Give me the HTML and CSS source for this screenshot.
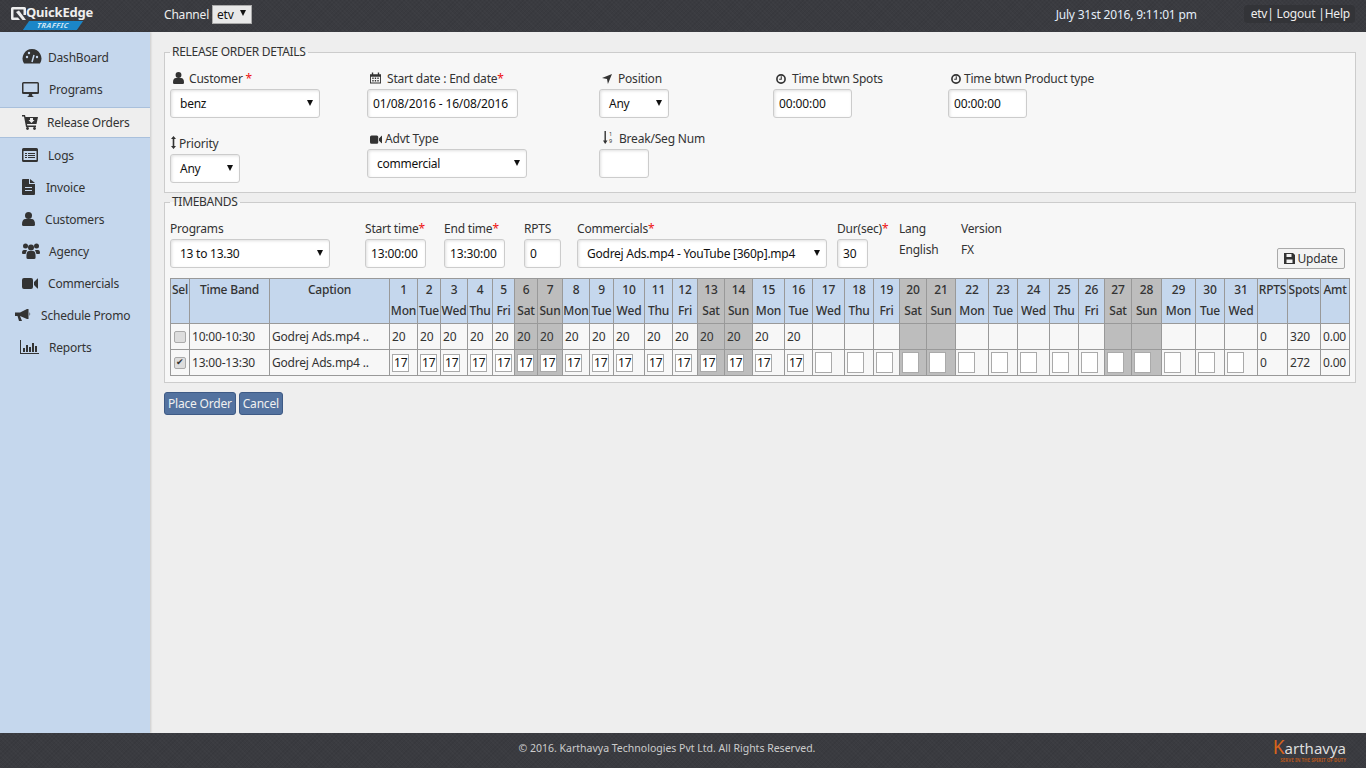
FILE: index.html
```html
<!DOCTYPE html>
<html>
<head>
    <meta http-equiv="Content-Type" content="text/html; charset=utf-8" />
    <title>QuickEdge Traffic</title>
    <link rel="stylesheet" href="styles.css">
</head>

<body>
    <header class="topbar">
        <div class="logo">
            <svg class="logo-mark" width="15" height="13" viewBox="0 0 15 13"><path d="M1.500 0h12Q15 0 15 1.500V8l-2.500 0V2.500h-10v8H7L9 13H1.500Q0 13 0 11.500v-10Q0 0 1.500 0z" fill="#eee"/><path d="M5 5l3-1.500L15 13h-3.500z" fill="#eee"/></svg>
            <span class="logo-name">QuickEdge</span>
            <span class="logo-tag"><span>TRAFFIC</span></span>
        </div>
        <div class="channel">
            <label>Channel</label>
            <span class="channel-select">etv <i class="arrow"></i></span>
        </div>
        <div class="clock">July 31st 2016, 9:11:01 pm</div>
        <div class="user-links">etv| Logout |Help</div>
    </header>

    <div class="layout">
        <nav class="sidebar">
            <ul>
                <li class="nav-dash"><svg width="20" height="18" viewBox="0 0 20 18"><path d="M10 1a9.500 9.500 0 0 0-8 14.500h16A9.500 9.500 0 0 0 10 1z" fill="#333"/><path d="M10 14l2-7" stroke="#c5d7ed" stroke-width="1.500"/><circle cx="5" cy="9" r="1.200" fill="#c5d7ed"/><circle cx="7" cy="5" r="1.200" fill="#c5d7ed"/><circle cx="15" cy="9" r="1.200" fill="#c5d7ed"/></svg>DashBoard</li>
                <li class="nav-prog"><svg width="17" height="15" viewBox="0 0 17 15"><path d="M0 1.500Q0 0 1.500 0h14Q17 0 17 1.500V11q0 1-1.500 1h-14Q0 12 0 11zM1.500 1.500V10h14V1.500zM5 15q2-.5 2-3h3q0 2.500 2 3z" fill="#333" fill-rule="evenodd"/></svg>Programs</li>
                <li class="nav-release active"><svg width="16" height="15" viewBox="0 0 16 15"><path d="M0 0h3l.5 2H16l-1.500 7H5l.3 1.500H14V12H4L2 1.500H0z" fill="#333"/><circle cx="5.500" cy="13.500" r="1.400" fill="#333"/><circle cx="12.500" cy="13.500" r="1.400" fill="#333"/><path d="M8 3h3v2h1.500L9.500 8 6.500 5H8z" fill="#eee"/></svg>Release Orders</li>
                <li class="nav-logs"><svg width="16" height="14" viewBox="0 0 16 14"><path d="M0 1.500Q0 0 1.500 0h13Q16 0 16 1.500v11q0 1.500-1.500 1.500h-13Q0 14 0 12.500zM1.500 3v9h13V3z" fill="#333" fill-rule="evenodd"/><path d="M3 5h2v1H3zM6 5h7v1H6zM3 7h2v1H3zM6 7h7v1H6zM3 9h2v1H3zM6 9h7v1H6z" fill="#333"/></svg>Logs</li>
                <li class="nav-inv"><svg width="13" height="16" viewBox="0 0 13 16"><path d="M1 0h6v5h6v10q0 1-1 1H1q-1 0-1-1V1q0-1 1-1zM8 0l5 4H8zM3 8v1h7V8zM3 11v1h7v-1z" fill="#333" fill-rule="evenodd"/></svg>Invoice</li>
                <li class="nav-cust"><svg width="13" height="14" viewBox="0 0 13 14"><circle cx="6.500" cy="3.500" r="3.500" fill="#333"/><path d="M0 12.500Q0 7 3.500 7h6Q13 7 13 12.500 13 14 11.500 14h-10Q0 14 0 12.500z" fill="#333"/></svg>Customers</li>
                <li class="nav-agency"><svg width="18" height="16" viewBox="0 0 18 16"><circle cx="3.500" cy="3" r="2.500" fill="#333"/><circle cx="14.500" cy="3" r="2.500" fill="#333"/><circle cx="9" cy="4.500" r="3" fill="#333"/><path d="M0 10q0-3 2-3h3L3.500 11H1q-1 0-1-1zM18 10q0-3-2-3h-3l1.500 4H17q1 0 1-1zM4.500 15q-.5-7 2.500-7h4q3 0 2.500 7 0 1-1.500 1H6q-1.500 0-1.500-1z" fill="#333"/></svg>Agency</li>
                <li class="nav-comm"><svg width="16" height="11" viewBox="0 0 16 11"><path d="M2 0h7q2 0 2 2v7q0 2-2 2H2q-2 0-2-2V2q0-2 2-2zM12 4l3.500-3.500H16v10h-.5L12 7z" fill="#333"/></svg>Commercials</li>
                <li class="nav-promo"><svg width="16" height="14" viewBox="0 0 16 14"><path d="M0 4.500h5L12 1h1.500v10H12L5 8 7 13H4L2.500 8H0zM14.500 4q1.500 2 0 4z" fill="#333"/></svg>Schedule Promo</li>
                <li class="nav-rep"><svg width="19" height="14" viewBox="0 0 19 14"><path d="M0 0h1v13h18v1H0zM3 8h2v4H3zM6 5h2v7H6zM9 7h2v5H9zM12 3h2v9h-2zM15 6h2v6h-2z" fill="#333"/></svg>Reports</li>
            </ul>
        </nav>

        <main class="content">
            <fieldset class="panel panel-order">
                <legend>RELEASE ORDER DETAILS</legend>
                <div class="order-row">
                    <div class="field f-customer">
                        <label><svg class="ico gap5" width="11" height="12" viewBox="0 0 13 14"><circle cx="6.500" cy="3.500" r="3.500" fill="#333"/><path d="M0 12.500Q0 7 3.500 7h6Q13 7 13 12.500 13 14 11.500 14h-10Q0 14 0 12.500z" fill="#333"/></svg>Customer <em>*</em></label>
                        <div class="box sel w150">benz<i class="arrow"></i></div>
                    </div>
                    <div class="field f-date">
                        <label><svg class="ico gap6" width="11" height="12" viewBox="0 0 12 12"><path d="M0 2h2V0h1.500v2h5V0H10v2h2v10H0zM1 4.500V11h10V4.500z" fill="#333" fill-rule="evenodd"/><path d="M2.500 5.500h1.500V7H2.500zM5.200 5.500h1.500V7H5.200zM8 5.500h1.500V7H8zM2.500 8.200h1.500v1.500H2.500zM5.200 8.200h1.500v1.500H5.200zM8 8.200h1.500v1.500H8z" fill="#333"/></svg>Start date : End date<em>*</em></label>
                        <div class="box text w151">01/08/2016 - 16/08/2016</div>
                    </div>
                    <div class="field f-pos">
                        <label><svg class="ico gap6" width="10" height="10" viewBox="0 0 11 11"><path d="M11 0L6.500 11 5.500 5.500 0 4.500z" fill="#333"/></svg>Position</label>
                        <div class="box sel w70">Any<i class="arrow"></i></div>
                    </div>
                    <div class="field f-spots">
                        <label><svg class="ico gap6" width="10" height="10" viewBox="0 0 11 11"><circle cx="5.500" cy="5.500" r="4.500" fill="none" stroke="#333" stroke-width="1.800"/><path d="M5.800 2.500v3.300H3.500" fill="none" stroke="#333" stroke-width="1.200"/></svg>Time btwn Spots</label>
                        <div class="box time">00:00:00</div>
                    </div>
                    <div class="field f-prod">
                        <label><svg class="ico gap3" width="10" height="10" viewBox="0 0 11 11"><circle cx="5.500" cy="5.500" r="4.500" fill="none" stroke="#333" stroke-width="1.800"/><path d="M5.800 2.500v3.300H3.500" fill="none" stroke="#333" stroke-width="1.200"/></svg>Time btwn Product type</label>
                        <div class="box time">00:00:00</div>
                    </div>
                </div>
                <div class="order-row row-two">
                    <div class="field f-customer f-prio">
                        <label><svg class="ico gap3" width="5" height="13" viewBox="0 0 5 13"><path d="M2.500 0L5 3H3.300v7H5l-2.500 3L0 10h1.700V3H0z" fill="#333"/></svg>Priority</label>
                        <div class="box sel w70">Any<i class="arrow"></i></div>
                    </div>
                    <div class="field f-date">
                        <label><svg class="ico gap3" width="12" height="9" viewBox="0 0 16 11"><path d="M2 0h7q2 0 2 2v7q0 2-2 2H2q-2 0-2-2V2q0-2 2-2zM12 4l3.500-3.500H16v10h-.5L12 7z" fill="#333"/></svg>Advt Type</label>
                        <div class="box sel w160">commercial<i class="arrow"></i></div>
                    </div>
                    <div class="field f-pos f-break">
                        <label><svg class="ico gap6" width="10" height="13" viewBox="0 0 10 13"><path d="M1.500 0h1.400v9.500H4.500L2.200 13 0 9.500h1.500z" fill="#333"/><text x="6" y="5" font-size="5.500" fill="#333">1</text><text x="6" y="12" font-size="5.500" fill="#333">9</text></svg>Break/Seg Num</label>
                        <div class="box blank"></div>
                    </div>
                </div>
            </fieldset>

            <fieldset class="panel panel-bands">
                <legend>TIMEBANDS</legend>
                <div class="band-row">
                    <div class="field b-prog"><label>Programs</label><div class="box sel w160">13 to 13.30<i class="arrow"></i></div></div>
                    <div class="field b-start"><label>Start time<em>*</em></label><div class="box plain w61">13:00:00</div></div>
                    <div class="field b-end"><label>End time<em>*</em></label><div class="box plain w61">13:30:00</div></div>
                    <div class="field b-rpts"><label>RPTS</label><div class="box plain w37">0</div></div>
                    <div class="field b-comm"><label>Commercials<em>*</em></label><div class="box sel w250">Godrej Ads.mp4 - YouTube [360p].mp4<i class="arrow"></i></div></div>
                    <div class="field b-dur"><label>Dur(sec)<em>*</em></label><div class="box plain w31">30</div></div>
                    <div class="field b-lang"><label>Lang</label><span class="static">English</span></div>
                    <div class="field b-ver"><label>Version</label><span class="static">FX</span></div>
                    <button class="update-btn"><svg width="11" height="11" viewBox="0 0 11 11"><path d="M0 0h9l2 2v9H0zM2.500 1v3h5V1zM2.500 6.500V10h6V6.500z" fill="#333" fill-rule="evenodd"/></svg>Update</button>
                </div>
                <table class="grid" id="grid"></table>
            </fieldset>

            <div class="actions">
                <button class="btn-blue">Place Order</button>
                <button class="btn-blue">Cancel</button>
            </div>
        </main>
    </div>

    <footer class="bottombar">
        <span class="copy">© 2016. Karthavya Technologies Pvt Ltd. All Rights Reserved.</span>
        <div class="brand">
            <span class="brand-name"><b>K</b>arthavya</span>
            <span class="brand-tag">SERVE IN THE SPIRIT OF DUTY</span>
        </div>
    </footer>

    <script>
        // column widths taken from the header row
        let dayWidths = [28,23,27,25,22,23,25,27,24,31,28,25,27,28,32,28,32,29,26,27,29,33,29,32,29,26,27,30,34,29,33];
        let names = ["Mon","Tue","Wed","Thu","Fri","Sat","Sun"];
        let grid = document.getElementById("grid");
        let html = '<colgroup><col style="width:19px"><col style="width:80px"><col style="width:120px">';
        for (let i = 0; i < 31; i++) {
            html += `<col style="width:${dayWidths[i]}px">`;
        }
        html += '<col style="width:30px"><col style="width:33px"><col style="width:29px"></colgroup>';

        function isWeekend(i) {
            return i % 7 === 5 || i % 7 === 6;
        }

        html += '<tr><th>Sel</th><th>Time Band</th><th>Caption</th>';
        for (let i = 0; i < 31; i++) {
            let cls = isWeekend(i) ? ' class="off"' : "";
            html += `<th${cls}><div>${i + 1}</div><div>${names[i % 7]}</div></th>`;
        }
        html += '<th>RPTS</th><th>Spots</th><th>Amt</th></tr>';

        html += '<tr><td class="chk"><span class="tick"></span></td><td>10:00-10:30</td><td>Godrej Ads.mp4 ..</td>';
        for (let i = 0; i < 31; i++) {
            let cls = isWeekend(i) ? ' class="off"' : "";
            html += `<td${cls}>${i < 16 ? 20 : ""}</td>`;
        }
        html += '<td>0</td><td>320</td><td>0.00</td></tr>';

        html += '<tr><td class="chk"><span class="tick on"></span></td><td>13:00-13:30</td><td>Godrej Ads.mp4 ..</td>';
        for (let i = 0; i < 31; i++) {
            let cls = isWeekend(i) ? "off" : "";
            if (i < 16) {
                html += `<td class="${cls}"><span class="day-box">17</span></td>`;
            } else {
                html += `<td class="${cls}"><span class="day-box empty"></span></td>`;
            }
        }
        html += '<td>0</td><td>272</td><td>0.00</td></tr>';
        grid.innerHTML = html;
    </script>
</body>

</html>
```
FILE: styles.css
```css
html, body {
    height: 100%;
}
body {
    margin: 0;
    padding: 0;
    display: flex;
    flex-direction: column;
    height: 768px;
    overflow: hidden;
    background: #eee;
    color: #333;
    font-family: "Noto Sans", "Open Sans", sans-serif;
    font-size: 12px;
    letter-spacing: -.2px;
}
em {
    color: #e11;
    font-style: normal;
}
.topbar, .bottombar {
    background-color: #3a3b40;
    background-image: repeating-linear-gradient(45deg, rgba(255, 255, 255, .015) 0 1px, transparent 1px 3px), repeating-linear-gradient(-45deg, rgba(0, 0, 0, .05) 0 1px, transparent 1px 3px);
    color: #eee;
    flex: none;
    display: flex;
    align-items: center;
}
.topbar {
    height: 32px;
}
.logo {
    width: 164px;
    height: 32px;
    flex: none;
    position: relative;
}
.logo-mark {
    position: absolute;
    left: 11px;
    top: 7px;
}
.logo-name {
    position: absolute;
    left: 26px;
    top: 3px;
    font-size: 13px;
    font-weight: 700;
    color: #eee;
}
.logo-tag {
    position: absolute;
    left: 26px;
    top: 21px;
    width: 54px;
    height: 9px;
    line-height: 9px;
    background: #1b86c8;
    transform: skewX(-35deg);
    text-align: center;
}
.logo-tag span {
    display: block;
    transform: skewX(20deg);
    color: #cfe6f5;
    font-size: 7px;
    font-weight: 700;
    letter-spacing: .5px;
}
.channel {
    display: flex;
    align-items: center;
    gap: 3px;
    margin-bottom: 3px;
}
.channel-select {
    width: 40px;
    height: 19px;
    box-sizing: border-box;
    background: #e8e8e8;
    color: #111;
    border: 1px solid #aaa;
    line-height: 17px;
    padding-left: 4px;
    position: relative;
}
.channel-select .arrow {
    right: 5px;
    top: 4px;
}
.clock {
    margin-left: auto;
    margin-right: 47px;
    margin-bottom: 4px;
    color: #e4eefa;
}
.user-links {
    background: #333438;
    border-radius: 4px;
    padding: 0 5px 0 7px;
    line-height: 18px;
    margin-right: 11px;
    margin-bottom: 4px;
}
.layout {
    flex: 1;
    display: flex;
    min-height: 0;
}
.sidebar {
    width: 150px;
    flex: none;
    background: #c5d7ed;
    box-shadow: 1px 0 2px rgba(0, 0, 0, .15);
}
.sidebar ul {
    list-style: none;
    margin: 0;
    padding: 9px 0 0;
}
.sidebar li {
    height: 32px;
    display: flex;
    align-items: center;
}
.sidebar li.active {
    background: #eee;
    border-top: 1px solid #a9c0dc;
    border-bottom: 1px solid #a9c0dc;
    height: 29px;
    margin: 2px 0 1px;
}
.nav-dash svg { margin: 0 6px 0 22px; }
.nav-prog svg { margin: 0 10px 0 22px; }
.nav-release svg { margin: 0 9px 0 22px; }
.nav-logs svg { margin: 0 10px 0 22px; }
.nav-inv svg { margin: 0 11px 0 22px; }
.nav-cust svg { margin: 0 10px 0 22px; }
.nav-agency svg { margin: 0 9px 0 22px; }
.nav-comm svg { margin: 0 10px 0 22px; }
.nav-promo svg { margin: 0 10px 0 15px; }
.nav-rep svg { margin: 0 10px 0 20px; }
.content {
    flex: 1;
    min-width: 0;
    padding: 13px 10px 0 14px;
}
.panel {
    margin: 0 0 2px;
    padding: 0 5px;
    background: #f7f7f7;
    border: 1px solid #ccc;
    min-width: 0;
}
.panel legend {
    padding: 0 2px;
    line-height: 14px;
    letter-spacing: -.3px;
}
.panel-order {
    height: 148px;
    box-sizing: border-box;
}
.panel-bands {
    height: 188px;
    box-sizing: border-box;
    margin-bottom: 9px;
}
.order-row {
    display: flex;
    margin-top: 11px;
}
.row-two {
    margin-top: 12px;
}
.field label {
    display: block;
    line-height: 17px;
    white-space: nowrap;
}
.ico {
    vertical-align: -1px;
}
.gap3 { margin-right: 3px; }
.gap5 { margin-right: 5px; }
.gap6 { margin-right: 6px; }
.f-customer { width: 197px; }
.f-date { width: 232px; }
.f-pos { width: 174px; }
.f-spots { width: 175px; }
.f-customer label, .f-date label, .f-pos label, .f-spots label, .f-prod label {
    padding-left: 3px;
}
.f-customer.f-prio { margin-top: 5px; }
.f-customer.f-prio label { padding-left: 1px; }
.f-pos.f-break label { padding-left: 4px; }
.box {
    box-sizing: border-box;
    height: 29px;
    line-height: 27px;
    background: #fff;
    border: 1px solid #ccc;
    border-radius: 3px;
    box-shadow: inset 1px 1px 3px rgba(0, 0, 0, .12);
    color: #111;
    position: relative;
    margin-top: 2px;
    white-space: nowrap;
    letter-spacing: -.12px;
}
.sel { padding-left: 9px; letter-spacing: -.25px; }
.text { padding-left: 5px; }
.time { padding-left: 5px; width: 79px; }
.plain { padding-left: 5px; }
.blank { width: 50px; }
.w150 { width: 150px; }
.w151 { width: 151px; }
.w70 { width: 70px; }
.w160 { width: 160px; }
.w61 { width: 61px; }
.w37 { width: 37px; }
.w31 { width: 31px; }
.w250 { width: 250px; }
.arrow {
    position: absolute;
    right: 6px;
    top: 10px;
    border-left: 3.500px solid transparent;
    border-right: 3.500px solid transparent;
    border-top: 6px solid #111;
}
.band-row {
    display: flex;
    position: relative;
    height: 58px;
    margin-top: 11px;
}
.b-prog { width: 195px; }
.b-start { width: 79px; }
.b-end { width: 80px; }
.b-rpts { width: 53px; }
.b-comm { width: 260px; }
.b-dur { width: 62px; }
.b-lang { width: 62px; }
.b-ver { width: 60px; }
.static {
    display: block;
    margin-top: 4px;
}
.update-btn {
    position: absolute;
    right: 5px;
    top: 28px;
    width: 68px;
    height: 21px;
    padding: 0;
    background: #f3f3f3;
    border: 1px solid #aaa;
    border-radius: 2px;
    color: #333;
    font: 12px "Noto Sans", "Open Sans", sans-serif;
    letter-spacing: -.2px;
}
.update-btn svg {
    vertical-align: -1px;
    margin-right: 2px;
}
.grid {
    table-layout: fixed;
    border-collapse: collapse;
    width: 1180px;
    color: #333;
}
.grid th, .grid td {
    border: 1px solid #999;
    padding: 0;
    white-space: nowrap;
}
.grid th {
    background: #c5d7ed;
    vertical-align: top;
    text-align: center;
    height: 44px;
    line-height: 21px;
    font-weight: 500;
}
.grid th.off, .grid td.off {
    background: #bdbdbd;
}
.grid td {
    height: 25px;
    padding-left: 2px;
}
.tick {
    display: block;
    width: 10px;
    height: 10px;
    margin-left: 1px;
    background: #ddd;
    border: 1px solid #aaa;
    border-radius: 2px;
    position: relative;
}
.tick.on::after {
    content: "✔";
    position: absolute;
    left: 1px;
    top: -3px;
    font-size: 9px;
    color: #333;
}
.day-box {
    display: block;
    box-sizing: border-box;
    width: 17px;
    height: 18px;
    line-height: 16px;
    padding-left: 1px;
    background: #fff;
    border: 1px solid #aaa;
    color: #111;
}
.day-box.empty {
    height: 21px;
}
.actions {
    display: flex;
    gap: 3px;
}
.btn-blue {
    height: 23px;
    padding: 0 3px;
    background: #53729f;
    border: 1px solid #3e5a85;
    border-radius: 3px;
    color: #f0f0f0;
    font: 12px "Noto Sans", "Open Sans", sans-serif;
    letter-spacing: -.2px;
}
.bottombar {
    height: 35px;
    position: relative;
    justify-content: center;
    font-size: 10.500px;
    letter-spacing: normal;
    color: #ccc;
    padding-bottom: 5px;
    box-sizing: border-box;
}
.copy {
    margin-left: -32px;
}
.brand {
    position: absolute;
    right: 20px;
    top: 5px;
    text-align: right;
}
.brand-name {
    display: block;
    font-size: 15px;
    line-height: 19px;
    color: #ddd;
}
.brand-name b {
    color: #d9641c;
    font-weight: 400;
    font-size: 19px;
}
.brand-tag {
    display: block;
    font-size: 4.500px;
    line-height: 5px;
    font-weight: 700;
    color: #b5561c;
}
```
